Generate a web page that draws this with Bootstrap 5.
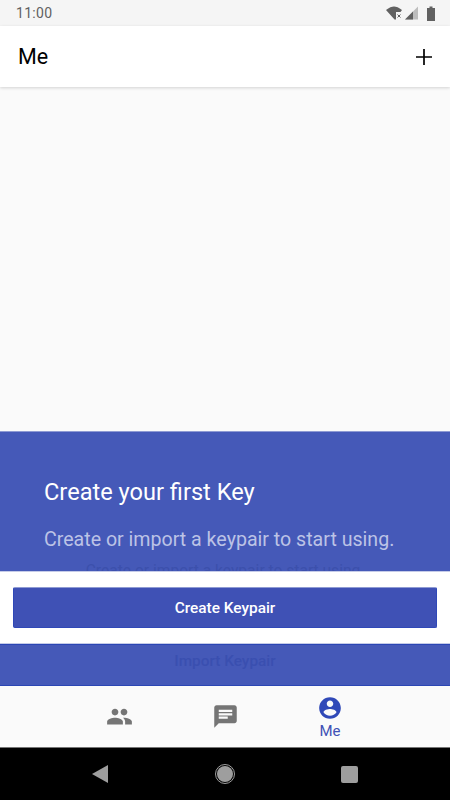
<!DOCTYPE html>
<html lang="en">
<head>
  <meta charset="UTF-8">
  <meta name="viewport" content="width=device-width, initial-scale=1.0">
  <title>Me</title>
  <link href="https://cdn.jsdelivr.net/npm/bootstrap@5.3.2/dist/css/bootstrap.min.css" rel="stylesheet">
  <style>
    body {
      font-family: Roboto, "Liberation Sans", sans-serif;
      background: #000;
    }
    .app-shell {
      width: 450px;
      height: 800px;
      overflow: hidden;
    }
    .status-strip {
      height: 26px;
      background: #f5f5f5;
      padding: 1px 14px 0 16px;
      color: #616161;
      font-size: 14px;
      letter-spacing: .3px;
    }
    .top-bar {
      height: 61px;
      background: #fff;
      padding: 1px 18px 0;
      box-shadow: 0 1px 3px rgba(0,0,0,.16);
      position: relative;
      color: #000;
    }
    .top-title {
      font-size: 21.5px;
      line-height: 1;
    }
    .blank-area {
      height: 344px;
      background: #fafafa;
    }
    .key-panel {
      height: 255px;
      background: #4559b8;
      border-top: 1px solid #8f9bd3;
      border-bottom: 1px solid #2b46b4;
    }
    .panel-copy {
      height: 139px;
      padding: 46px 44px 0;
      overflow: hidden;
    }
    .panel-title {
      color: #fff;
      font-size: 23.6px;
      line-height: 28px;
      font-weight: 400;
      margin: 0 0 22px;
    }
    .panel-text {
      color: #bcc3e6;
      font-size: 19.6px;
      line-height: 24px;
      margin: 0 0 9px;
      white-space: nowrap;
    }
    .ghost-text {
      color: #3c50ac;
      font-size: 15.6px;
      line-height: 20px;
      text-align: center;
      margin-left: -44px;
      margin-right: -44px;
      padding-right: 4px;
    }
    .action-band {
      height: 73px;
      background: #fff;
      padding: 15px 13px;
      border-top: 1px solid #c5cbe8;
      border-bottom: 1px solid #c5cbe8;
    }
    .btn-keypair {
      height: 41px;
      background: #3f51b5;
      border: 1px solid #2f48b8;
      border-top-color: #8f9bd3;
      border-radius: 2px;
      color: #fff;
      font-size: 15.4px;
      font-weight: 500;
      padding: 2px 0 0;
    }
    .import-label {
      color: #3a4fb0;
      font-size: 15.4px;
      font-weight: 500;
      height: 40px;
      padding-bottom: 6px;
      border-top: 1px solid #2b46b4;
    }
    .tab-strip {
      height: 61px;
      background: #fafafa;
      padding: 0 66px;
    }
    .tab-cell {
      width: 106px;
    }
    .tab-me {
      color: #3f51b5;
      font-size: 15px;
      line-height: 20px;
      padding: 2px 2px 0 0;
    }
    .system-bar {
      height: 53px;
      background: #000;
      border-top: 1px solid #757575;
      padding: 0 92px;
    }
  </style>
</head>
<body>
  <div class="app-shell d-flex flex-column">
    <!-- Status bar -->
    <div class="status-strip d-flex align-items-center justify-content-between">
      <span>11:00</span>
      <svg width="50" height="16" viewBox="0 0 50 16">
        <path d="M0 4C3 1.500 6 .5 8 .5s5 1 8 3.500L14.500 6H10V13.500H8.500Z" fill="#616161"/>
        <path d="M11.500 8.500l3 3m0-3l-3 3" stroke="#616161" stroke-width="1"/>
        <path d="M19 13.500L32 .5V13.500Z" fill="#bdbdbd"/>
        <path d="M19 13.500L27 5.500V13.500Z" fill="#616161"/>
        <path d="M41 2h2.500V.5h3V2H49V15H41Z" fill="#616161"/>
      </svg>
    </div>

    <!-- Header -->
    <div class="top-bar d-flex align-items-center justify-content-between">
      <span class="top-title">Me</span>
      <svg width="16" height="16" viewBox="0 0 16 16">
        <path d="M8 0v16M0 8h16" stroke="#000" stroke-width="1.700"/>
      </svg>
    </div>

    <div class="blank-area"></div>

    <!-- Create key panel -->
    <div class="key-panel">
      <div class="panel-copy">
        <h2 class="panel-title">Create your first Key</h2>
        <p class="panel-text">Create or import a keypair to start using.</p>
        <div class="ghost-text">Create or import a keypair to start using</div>
      </div>
      <div class="action-band">
        <button type="button" class="btn btn-keypair w-100">Create Keypair</button>
      </div>
      <div class="import-label d-flex align-items-center justify-content-center">Import Keypair</div>
    </div>

    <!-- Bottom tabs -->
    <div class="tab-strip d-flex align-items-center">
      <div class="tab-cell d-flex justify-content-center">
        <svg width="27" height="27" viewBox="0 0 24 24"><path fill="#757575" d="M16 11c1.660 0 2.990-1.340 2.990-3S17.660 5 16 5s-3 1.340-3 3 1.340 3 3 3zm-8 0c1.660 0 2.990-1.340 2.990-3S9.660 5 8 5 5 6.340 5 8s1.340 3 3 3zm0 2c-2.330 0-7 1.170-7 3.500V19h14v-2.500c0-2.330-4.670-3.500-7-3.500zm8 0c-.290 0-.620.020-.970.050 1.160.840 1.970 1.970 1.970 3.450V19h6v-2.500c0-2.330-4.670-3.500-7-3.500z"/></svg>
      </div>
      <div class="tab-cell d-flex justify-content-center">
        <svg width="27" height="27" viewBox="0 0 24 24"><path fill="#757575" d="M20 2H4c-1.100 0-2 .9-2 2v18l4-4h14c1.100 0 2-.9 2-2V4c0-1.100-.9-2-2-2zM6 9h12v2H6V9zm8 5H6v-2h8v2zm4-6H6V6h12v2z"/></svg>
      </div>
      <div class="tab-cell d-flex flex-column align-items-center tab-me">
        <svg width="26" height="26" viewBox="0 0 24 24"><path fill="#3049b8" d="M12 2C6.480 2 2 6.480 2 12s4.480 10 10 10 10-4.480 10-10S17.520 2 12 2zm0 3c1.660 0 3 1.340 3 3s-1.340 3-3 3-3-1.340-3-3 1.340-3 3-3zm0 14.200c-2.500 0-4.710-1.280-6-3.220.030-1.990 4-3.080 6-3.080 1.990 0 5.970 1.090 6 3.080-1.290 1.940-3.500 3.220-6 3.220z"/></svg>
        <span>Me</span>
      </div>
    </div>

    <!-- Android navigation -->
    <div class="system-bar d-flex align-items-center justify-content-between">
      <svg width="16" height="18" viewBox="0 0 16 18"><path d="M16 0V18L0 9Z" fill="#9e9e9e"/></svg>
      <svg width="20" height="20" viewBox="0 0 20 20"><circle cx="10" cy="10" r="9.500" fill="none" stroke="#9e9e9e" stroke-width="1"/><circle cx="10" cy="10" r="8" fill="#9e9e9e"/></svg>
      <svg width="17" height="17" viewBox="0 0 17 17"><rect width="17" height="17" rx="2" fill="#9e9e9e"/></svg>
    </div>
  </div>

  <script src="https://cdn.jsdelivr.net/npm/bootstrap@5.3.2/dist/js/bootstrap.bundle.min.js"></script>
</body>
</html>
